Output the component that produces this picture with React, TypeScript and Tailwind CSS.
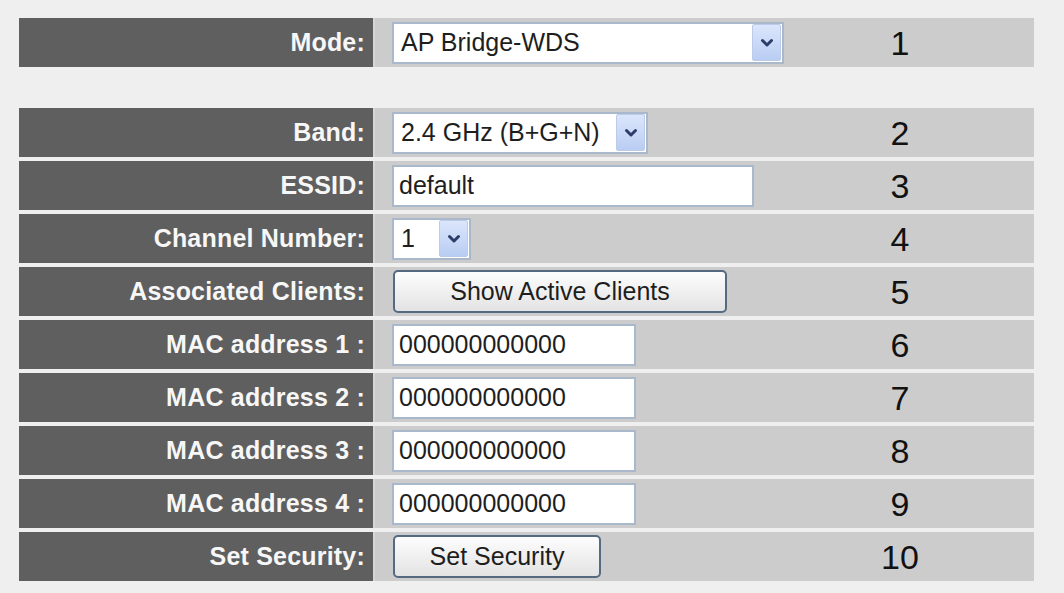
import React from "react";

const FONT = { fontFamily: '"Liberation Sans", Arial, sans-serif' };

function Chevron() {
  return (
    <svg width="14" height="10" viewBox="0 0 14 10" className="block">
      <path d="M2.5 2.5 L7 7 L11.5 2.5" fill="none" stroke="#2c3d6a" strokeWidth="3" strokeLinecap="round" strokeLinejoin="round" />
    </svg>
  );
}

function SelectBox({ value, width }: { value: string; width: string }) {
  return (
    <div className={`${width} h-[42px] flex items-center bg-white border-2 border-[#a9b8ca] pl-[7px] pr-[1px]`}>
      <span className="flex-1 text-[25px] leading-none text-[#1e1e1e] whitespace-nowrap">{value}</span>
      <div className="w-[29px] h-[37px] flex items-center justify-center bg-gradient-to-b from-[#dbe6fb] to-[#b9cdf3] border border-[#bccbe9] rounded-[2px]">
        <Chevron />
      </div>
    </div>
  );
}

function TextField({ value, width }: { value: string; width: string }) {
  return (
    <input
      readOnly
      value={value}
      className={`${width} h-[42px] bg-white border-2 border-[#a9b8ca] px-[5px] text-[25px] text-[#1e1e1e] outline-none`}
      style={FONT}
    />
  );
}

function PushButton({ label, width }: { label: string; width: string }) {
  return (
    <button
      className={`${width} ml-[1px] h-[43px] rounded-[5px] border-2 border-[#556a80] bg-gradient-to-b from-[#fdfdfd] to-[#e3e3e3] text-[25px] text-[#1e1e1e] leading-none`}
      style={FONT}
    >
      {label}
    </button>
  );
}

function Row({ label, num, children }: { label: string; num: string; children: React.ReactNode }) {
  return (
    <div className="flex h-[49px] gap-[2px] bg-[#d6d6d6]">
      <div className="w-[354px] bg-[#5f5f5f] flex items-center justify-end pr-[8px]">
        <span className="text-[25px] font-bold text-[#f7f7f7] leading-none whitespace-nowrap tracking-[0.2px]">{label}</span>
      </div>
      <div className="w-[659px] bg-[#cccccc] flex items-center">
        <div className="flex-1 pl-[17px] flex items-center">{children}</div>
        <div className="w-[160px] text-center text-[34px] leading-none text-[#111]">{num}</div>
        <div className="w-[54px]" />
      </div>
    </div>
  );
}

export default function App() {
  return (
    <div className="w-[1064px] h-[593px] bg-[#efefef] pt-[18px] pl-[19px] overflow-hidden" style={FONT}>
      <div className="flex flex-col gap-[4px] w-[1015px]">
        <Row label="Mode:" num="1">
          <SelectBox value="AP Bridge-WDS" width="w-[392px]" />
        </Row>
        <div className="h-[33px]" />
        <Row label="Band:" num="2">
          <SelectBox value="2.4 GHz (B+G+N)" width="w-[256px]" />
        </Row>
        <Row label="ESSID:" num="3">
          <TextField value="default" width="w-[362px]" />
        </Row>
        <Row label="Channel Number:" num="4">
          <SelectBox value="1" width="w-[79px]" />
        </Row>
        <Row label="Associated Clients:" num="5">
          <PushButton label="Show Active Clients" width="w-[334px]" />
        </Row>
        <Row label="MAC address 1 :" num="6">
          <TextField value="000000000000" width="w-[244px]" />
        </Row>
        <Row label="MAC address 2 :" num="7">
          <TextField value="000000000000" width="w-[244px]" />
        </Row>
        <Row label="MAC address 3 :" num="8">
          <TextField value="000000000000" width="w-[244px]" />
        </Row>
        <Row label="MAC address 4 :" num="9">
          <TextField value="000000000000" width="w-[244px]" />
        </Row>
        <Row label="Set Security:" num="10">
          <PushButton label="Set Security" width="w-[208px]" />
        </Row>
      </div>
    </div>
  );
}
